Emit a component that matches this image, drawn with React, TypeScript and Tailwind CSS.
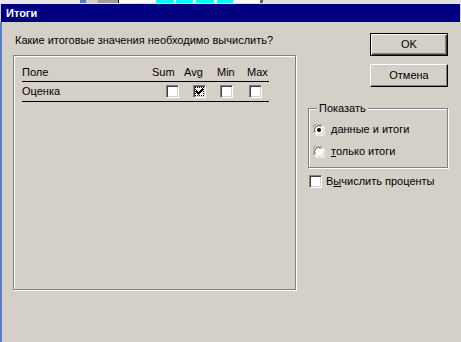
import React from "react";

function Check({ checked = false }: { checked?: boolean }) {
  return (
    <div className="w-[13px] h-[13px] shrink-0 border border-t-[#808080] border-l-[#808080] border-b-white border-r-white bg-white shadow-[inset_1px_1px_0_#404040,inset_-1px_-1px_0_#d4d0c8] flex items-center justify-center">
      {checked && (
        <div className="w-[9px] h-[9px] outline outline-1 outline-dotted outline-black -outline-offset-1 flex items-center justify-center">
          <svg width="7" height="7" viewBox="0 0 7 7" shapeRendering="crispEdges">
            <path d="M0 2h1v1h1v1h1v-1h1v-1h1v-1h1v-1h1v3h-1v1h-1v1h-1v1h-1v1h-1v-1h-1v-1h-1v-1h-1z" fill="#000" />
          </svg>
        </div>
      )}
    </div>
  );
}

function Radio({ checked = false }: { checked?: boolean }) {
  return (
    <svg width="12" height="12" viewBox="0 0 12 12" className="shrink-0">
      <circle cx="6" cy="6" r="5.5" fill="#fff" />
      <path d="M1.2 9 A5.5 5.5 0 0 1 9 1.2" stroke="#808080" strokeWidth="1" fill="none" />
      <path d="M2.3 8.3 A4.3 4.3 0 0 1 8.3 2.3" stroke="#404040" strokeWidth="1" fill="none" />
      <path d="M10.8 3 A5.5 5.5 0 0 1 3 10.8" stroke="#fff" strokeWidth="1" fill="none" />
      <path d="M9.7 3.7 A4.3 4.3 0 0 1 3.7 9.7" stroke="#d4d0c8" strokeWidth="1" fill="none" />
      {checked && <circle cx="6" cy="6" r="2" fill="#000" />}
    </svg>
  );
}

export default function App() {
  return (
    <div className="w-[461px] h-[342px] bg-[#d4d0c8] flex flex-col overflow-hidden font-['Liberation_Sans',Arial,sans-serif] text-[11px] leading-[13px] text-black">
      {/* strip of the desktop above the window */}
      <div className="h-[3px] flex shrink-0">
        <div className="w-[80px] bg-[#e8e8e8]" />
        <div className="w-[6px] bg-[#5a7ccc]" />
        <div className="w-[12px] bg-[#d4d0c8]" />
        <div className="w-[20px] bg-[#a0a0a0]" />
        <div className="w-[1px] bg-black" />
        <div className="w-[37px] bg-white" />
        <div className="w-[18px] bg-[#00ffff]" />
        <div className="w-[2px] bg-white" />
        <div className="w-[17px] bg-[#00ffff]" />
        <div className="w-[3px] bg-white" />
        <div className="w-[18px] bg-[#00ffff]" />
        <div className="w-[3px] bg-white" />
        <div className="w-[16px] bg-[#00ffff]" />
        <div className="w-[27px] bg-white" />
        <div className="w-[3px] bg-[#606060]" />
        <div className="flex-1 bg-[#e0e0e0]" />
      </div>

      <div className="h-[1px] bg-[#e4e2dc] shrink-0" />

      <div className="h-[18px] mx-[1px] bg-[#000080] flex items-center pl-[5px] shrink-0">
        <span className="text-white font-bold">Итоги</span>
      </div>

      <div className="flex-1 flex border-l-2 border-[#5a7ccc]">
        {/* left column */}
        <div className="ml-[11px] flex flex-col">
          <div className="mt-[12px] pl-[2px]">Какие итоговые значения необходимо вычислить?</div>

          <div className="mt-[8px] w-[283px] h-[235px] border border-[#808080] shadow-[inset_1px_1px_0_#fff,1px_1px_0_#fff] pl-[8px] pt-[10px]">
            <div className="w-[247px] h-[16px] flex border-b border-black">
              <span className="w-[130px]">Поле</span>
              <span className="w-[32px]">Sum</span>
              <span className="w-[33px]">Avg</span>
              <span className="w-[30px]">Min</span>
              <span>Max</span>
            </div>
            <div className="w-[247px] h-[20px] flex items-center border-b border-black">
              <span className="w-[144px]">Оценка</span>
              <Check />
              <div className="ml-[14px]"><Check checked /></div>
              <div className="ml-[14px]"><Check /></div>
              <div className="ml-[16px]"><Check /></div>
            </div>
          </div>
        </div>

        {/* right column */}
        <div className="ml-[12px] w-[140px] flex flex-col">
          <button className="mt-[11px] self-end w-[78px] h-[23px] border border-black shadow-[inset_1px_1px_0_#fff,inset_-1px_-1px_0_#404040,inset_-2px_-2px_0_#808080] bg-[#d4d0c8] flex items-center justify-center">
            OK
          </button>
          <button className="mt-[8px] self-end w-[78px] h-[23px] border border-t-white border-l-white border-b-black border-r-black shadow-[inset_-1px_-1px_0_#808080] bg-[#d4d0c8] flex items-center justify-center">
            Отмена
          </button>

          <div className="relative mt-[21px] w-[140px] h-[60px] border border-[#808080] shadow-[inset_1px_1px_0_#fff,1px_1px_0_#fff] pl-[4px] pt-[14px]">
            <span className="absolute -top-[7px] left-[8px] px-[2px] bg-[#d4d0c8]">Показать</span>
            <div className="flex items-center gap-[6px] h-[13px]">
              <Radio checked />
              <span><span className="underline">д</span>анные и итоги</span>
            </div>
            <div className="flex items-center gap-[6px] h-[13px] mt-[9px]">
              <Radio />
              <span><span className="underline">т</span>олько итоги</span>
            </div>
          </div>

          <div className="mt-[7px] ml-[1px] flex items-center gap-[4px]">
            <Check />
            <span>В<span className="underline">ы</span>числить проценты</span>
          </div>
        </div>
      </div>
    </div>
  );
}
